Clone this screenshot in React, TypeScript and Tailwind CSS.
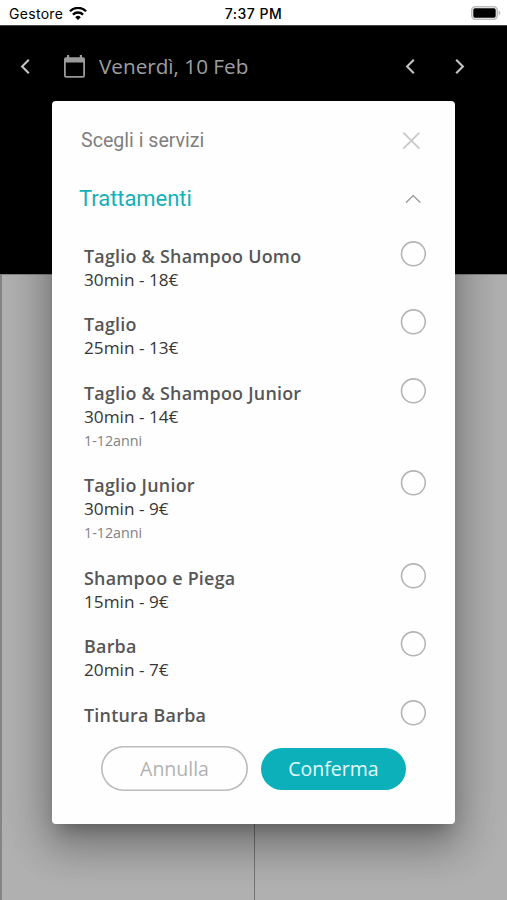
interface Service {
  name: string;
  detail?: string;
  note?: string;
}

const services: Service[] = [
  { name: 'Taglio & Shampoo Uomo', detail: '30min - 18€' },
  { name: 'Taglio', detail: '25min - 13€' },
  { name: 'Taglio & Shampoo Junior', detail: '30min - 14€', note: '1-12anni' },
  { name: 'Taglio Junior', detail: '30min - 9€', note: '1-12anni' },
  { name: 'Shampoo e Piega', detail: '15min - 9€' },
  { name: 'Barba', detail: '20min - 7€' },
  { name: 'Tintura Barba' },
];

const Chevron = ({ direction }: { direction: 'left' | 'right' }) => (
  <svg
    width="10"
    height="16"
    viewBox="0 0 10 16"
    fill="none"
    stroke="#c4c4c4"
    strokeWidth="2.1"
  >
    <path d={direction === 'left' ? 'M8.8 .7 2.1 7.5l6.7 6.8' : 'M1.2 .7 7.9 7.5l-6.7 6.8'} />
  </svg>
);

const StatusBar = () => (
  <div className="flex h-[25px] items-center justify-between bg-white pr-[6px] pl-[9px] font-['Inter',sans-serif] text-black">
    <div className="flex w-[160px] items-center gap-[6px] pt-[2px]">
      <span className="text-[14px] leading-none tracking-[0.3px]">Gestore</span>
      <svg width="18" height="14" viewBox="0 0 18 14" fill="none" stroke="#000" strokeWidth="2.3">
        <path d="M.9 4.2a11.6 11.6 0 0 1 16.2 0" />
        <path d="M3.9 7.6a7.3 7.3 0 0 1 10.2 0" />
        <path d="M9 13 6.2 10.2a4 4 0 0 1 5.6 0Z" fill="#000" stroke="none" />
      </svg>
    </div>
    <span className="pt-[3px] pr-[3px] text-[14px] leading-none font-medium tracking-[0.5px]">7:37 PM</span>
    <div className="flex w-[160px] justify-end">
      <svg width="30" height="14" viewBox="0 0 30 14">
        <rect x=".8" y=".8" width="25.4" height="12.4" rx="3.4" fill="#fff" stroke="#bdbdbd" strokeWidth="1.6" />
        <rect x="2.3" y="2.3" width="22.4" height="9.4" rx="1.6" fill="#000" />
        <path d="M27.6 4.6c2.4.8 2.4 4 0 4.8Z" fill="#bdbdbd" />
      </svg>
    </div>
  </div>
);

const CalendarHeader = () => (
  <div className="h-[249px] border-t border-[#444] bg-black">
    <div className="flex h-[81px] items-center pl-[20px]">
      <Chevron direction="left" />
      <svg className="ml-[34px]" width="21" height="24" viewBox="0 0 21 24" fill="#9c9c9c">
        <path d="M3 0h2.2v2.2h10.6V0H18v2.2h1a2 2 0 0 1 2 2V20.7a2 2 0 0 1-2 2H2a2 2 0 0 1-2-2V4.2a2 2 0 0 1 2-2h1V0ZM1.8 7.5v13.4h17.4V7.5H1.8Z" />
      </svg>
      <span className="ml-[14px] w-[306px] text-[20.7px] text-[#a0a0a0]">
        Venerdì, 10 Feb
      </span>
      <Chevron direction="left" />
      <span className="ml-[40px] flex">
        <Chevron direction="right" />
      </span>
    </div>
  </div>
);

const ServiceRow = ({ service }: { service: Service }) => (
  <li className="flex items-start justify-between pb-[20.45px]">
    <div className="text-[17.2px] leading-[24px]">
      <p className="text-[17.9px] font-semibold tracking-[0.24px] text-[#565656]">{service.name}</p>
      {service.detail && <p className="text-[#363636]">{service.detail}</p>}
      {service.note && <p className="text-[14.3px] text-[#828282]">{service.note}</p>}
    </div>
    <svg className="-mt-[3px]" width="26" height="26" viewBox="0 0 26 26" fill="none">
      <circle cx="13.4" cy="12.8" r="11.9" stroke="#b4b4b4" strokeWidth="1.6" />
    </svg>
  </li>
);

const ServiceDialog = () => (
  <div className="flex h-[723px] w-[403px] flex-col rounded-[4px] bg-[#fefefe] shadow-[0_11px_15px_-7px_rgba(0,0,0,0.24),0_24px_38px_3px_rgba(0,0,0,0.18),0_9px_46px_8px_rgba(0,0,0,0.2)]">
    <div className="flex h-[78px] shrink-0 items-center justify-between pr-[35px] pl-[29px]">
      <h2 className="pt-px font-['Roboto',sans-serif] text-[19.6px] text-[#808080]">Scegli i servizi</h2>
      <svg width="18" height="18" viewBox="0 0 18 18" fill="none" stroke="#c8c8c8" strokeWidth="1.8">
        <path d="m1.4 1.6 16 16M17.4 1.6l-16 16" />
      </svg>
    </div>
    <div className="flex h-[38px] shrink-0 items-center justify-between pr-[34px] pl-[27px]">
      <h3 className="font-['Roboto',sans-serif] text-[22px] tracking-[-0.05px] text-[#13b1bb]">Trattamenti</h3>
      <svg width="16" height="9" viewBox="0 0 16 9" fill="none" stroke="#929292" strokeWidth="1.3">
        <path d="m1 8.6 7.2-7 7.2 7" />
      </svg>
    </div>
    <ul className="h-[520px] shrink-0 overflow-hidden pt-[27px] pr-[29px] pl-[32px]">
      {services.map((service) => (
        <ServiceRow key={service.name} service={service} />
      ))}
    </ul>
    <div className="flex items-center gap-[13px] pt-[9px] pl-[49px]">
      <button className="h-[45px] w-[147px] rounded-full text-[19.5px] text-[#b2b2b2] shadow-[inset_0_0_0_1.6px_#bbbbbb]">
        Annulla
      </button>
      <button className="h-[42px] w-[145px] rounded-full bg-[#0cb0bb] text-[19.5px] text-[#e3fafb]">
        Conferma
      </button>
    </div>
  </div>
);

const App = () => {
  return (
    <div className="relative h-[900px] w-[507px] overflow-hidden bg-[#b0b0b0] font-['Open_Sans',sans-serif]">
      <StatusBar />
      <CalendarHeader />
      <div className="flex h-[626px] border-t border-l-2 border-t-[#858080] border-l-[#858585]">
        <div className="w-[253px] border-r border-[#737373]" />
      </div>
      <div className="absolute inset-0 flex items-start pt-[101px] pl-[52px]">
        <ServiceDialog />
      </div>
    </div>
  );
};

export default App;
